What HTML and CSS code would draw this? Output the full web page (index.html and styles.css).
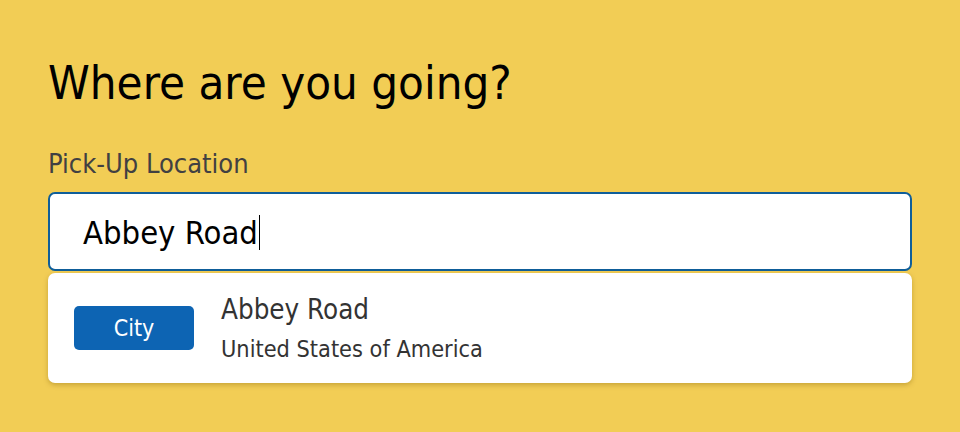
FILE: index.html
```html
<!DOCTYPE html>
<html>
<head>
<meta charset="utf-8">
<link rel="stylesheet" href="styles.css">
</head>
<body>
<main class="page">
  <h1 class="title">Where are you going?</h1>
  <label class="label" for="pickup">Pick-Up Location</label>
  <div class="field">
    <span class="field-text">Abbey Road</span><span class="caret"></span>
  </div>
  <ul class="results">
    <li class="result">
      <span class="badge">City</span>
      <div class="result-info">
        <div class="result-name">Abbey Road</div>
        <div class="result-country">United States of America</div>
      </div>
    </li>
  </ul>
</main>
</body>
</html>
```
FILE: styles.css
```css
html, body {
  margin: 0;
  padding: 0;
  background: #f2cd55;
  height: 100%;
}
body {
  font-family: "DejaVu Sans Condensed", "DejaVu Sans", sans-serif;
  font-stretch: condensed;
}
.page {
  padding: 55px 48px 0 48px;
  display: flex;
  flex-direction: column;
}
.title {
  margin: 0;
  font-size: 47px;
  font-weight: normal;
  line-height: 56px;
  color: #000;
}
.label {
  margin-top: 37px;
  font-size: 27px;
  line-height: 32px;
  color: #414042;
}
.field {
  margin-top: 12px;
  height: 79px;
  box-sizing: border-box;
  border: 2px solid #0f5e9a;
  border-radius: 7px;
  background: #fff;
  display: flex;
  align-items: center;
  padding-left: 33px;
}
.field-text {
  font-size: 32.5px;
  color: #000;
  position: relative;
  top: 1px;
}
.caret {
  width: 1.5px;
  height: 35px;
  background: #000;
  margin-left: 1px;
  position: relative;
  top: 1px;
}
.results {
  list-style: none;
  margin: 2px 0 0 0;
  padding: 0;
  background: #fff;
  border-radius: 7px;
  box-shadow: 0 2px 5px rgba(120, 90, 0, 0.35);
}
.result {
  display: flex;
  align-items: center;
  height: 110px;
  padding-left: 26px;
}
.badge {
  width: 120px;
  height: 44px;
  background: #0d64b3;
  color: #fff;
  border-radius: 5px;
  display: flex;
  align-items: center;
  justify-content: center;
  font-size: 23px;
}
.result-info {
  margin-left: 27px;
  display: flex;
  flex-direction: column;
  gap: 10px;
  color: #333;
}
.result-name {
  font-size: 27.5px;
  line-height: 32px;
}
.result-country {
  font-size: 23.3px;
  line-height: 28px;
}
```
